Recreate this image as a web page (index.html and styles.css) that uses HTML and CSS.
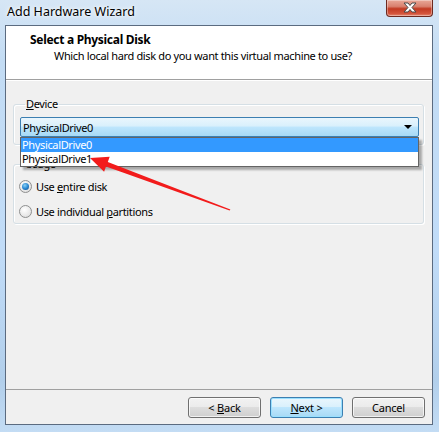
FILE: index.html
```html
<!DOCTYPE html>
<html>
<head>
<meta charset="utf-8">
<link rel="stylesheet" href="styles.css">
</head>
<body>
<div class="window">
  <div class="titlebar">
    <span class="title">Add Hardware Wizard</span>
    <div class="close">
      <svg width="18" height="11" viewBox="0 0 18 11"><path d="M3 1 L7 1 L9 3.5 L11 1 L15 1 L11 5.5 L15 10 L11 10 L9 7.5 L7 10 L3 10 L7 5.5 Z" fill="#fff" stroke="#4a4a4a" stroke-width="1"/></svg>
    </div>
  </div>
  <div class="client">
    <div class="header">
      <div class="h-title">Select a Physical Disk</div>
      <div class="h-sub">Which local hard disk do you want this virtual machine to use?</div>
    </div>
    <div class="content">
      <fieldset class="group device">
        <legend><u>D</u>evice</legend>
        <div class="combo"><span>PhysicalDrive0</span><span class="caret"></span></div>
      </fieldset>
      <fieldset class="group usage">
        <legend>Usage</legend>
        <div class="radio"><span class="rb checked"></span><span>Use <u>e</u>ntire disk</span></div>
        <div class="radio"><span class="rb"></span><span>Use individual <u>p</u>artitions</span></div>
      </fieldset>
      <div class="dropdown">
        <div class="opt sel">PhysicalDrive0</div>
        <div class="opt">PhysicalDrive1</div>
      </div>
    </div>
    <div class="footer">
      <button class="btn">&lt; <u>B</u>ack</button>
      <button class="btn default"><u>N</u>ext &gt;</button>
      <button class="btn">Cancel</button>
    </div>
  </div>
  <svg class="arrow" width="439" height="432" viewBox="0 0 439 432">
    <polygon points="90,158 109.7,156.8 107.8,162 230.4,209.4 229.6,210.6 106,166.6 104.1,171.8" fill="#f21b1b"/>
  </svg>
</div>
</body>
</html>
```
FILE: styles.css
```css
* { box-sizing: border-box; }
html, body { margin: 0; padding: 0; }
body {
  width: 439px;
  height: 432px;
  overflow: hidden;
  font-family: "Noto Sans", "Open Sans", sans-serif;
  font-size: 11px;
  letter-spacing: -0.35px;
  color: #000;
}
.window {
  position: relative;
  width: 439px;
  height: 432px;
  background: linear-gradient(180deg, #d6e6f5 0px, #c3dcf4 60px, #c1dcf8 250px, #b2cfeb 380px, #c3dcf4 432px);
  padding: 0 6px 0 5px;
  display: flex;
  flex-direction: column;
}
.titlebar {
  height: 25px;
  display: flex;
  align-items: flex-start;
  position: relative;
}
.title {
  padding-left: 2px;
  padding-top: 3px;
  font-size: 12.5px;
  letter-spacing: 0;
  line-height: 17px;
  color: #000;
  text-shadow: 0 0 6px #fff, 0 0 3px #fff;
}
.close {
  margin-left: auto;
  margin-right: 0;
  width: 47px;
  height: 17px;
  border: 1px solid #6d2a20;
  border-top: none;
  border-radius: 0 0 4px 4px;
  background: linear-gradient(180deg, #e9a898 0%, #d9816f 40%, #c23a22 55%, #d4553c 85%, #e48a72 100%);
  display: flex;
  align-items: center;
  justify-content: center;
  box-shadow: inset 0 0 0 1px rgba(255,255,255,0.35);
}
.close svg { display: block; margin-top: -1px; }
.client {
  height: 400px;
  border: 1px solid #5b6b80;
  background: #f0f0f0;
  display: flex;
  flex-direction: column;
  position: relative;
}
.header {
  height: 54px;
  background: #fff;
  border-bottom: 1px solid #a0a0a0;
  box-shadow: 0 1px 0 #fff;
  padding: 6px 0 0 24px;
}
.h-title {
  font-weight: bold;
  font-size: 12px;
  letter-spacing: -0.3px;
  line-height: 16px;
  height: 16px;
}
.h-sub {
  padding-left: 24px;
  line-height: 16px;
}
.content {
  flex: 1;
  position: relative;
  padding: 0 8px 0 7px;
}
.group {
  margin: 0;
  border: 1px solid #d5dfe5;
  border-radius: 3px;
  box-shadow: inset 1px 1px 0 #fff, 1px 1px 0 #fff;
  min-width: 0;
}
.group legend {
  padding: 0 1px;
  margin-left: 5px;
  line-height: 16px;
}
.device {
  margin-top: 16px;
  padding: 5px 4px 7px 6px;
}
.combo {
  height: 20px;
  border: 1px solid #3c7fb1;
  border-radius: 2px;
  background: linear-gradient(180deg, #eaf6fd 0%, #d9f0fc 45%, #bee6fd 50%, #a7d9f5 100%);
  display: flex;
  align-items: center;
  padding-left: 2px;
  padding-right: 6px;
}
.caret {
  margin-left: auto;
  width: 0;
  height: 0;
  border-left: 4px solid transparent;
  border-right: 4px solid transparent;
  border-top: 4px solid #000;
}
.usage {
  margin-top: 11px;
  padding: 6px 4px 4px 5px;
  display: flex;
  flex-direction: column;
  gap: 9px;
}
.radio {
  display: flex;
  align-items: center;
  height: 16px;
  gap: 4px;
}
.rb {
  width: 13px;
  height: 13px;
  border-radius: 50%;
  border: 1px solid #8e8f8f;
  background: radial-gradient(circle at 40% 35%, #ffffff 0%, #e8e8e8 60%, #d4d4d4 100%);
  position: relative;
}
.rb.checked::after {
  content: "";
  position: absolute;
  left: 2px;
  top: 2px;
  width: 7px;
  height: 7px;
  border-radius: 50%;
  background: radial-gradient(circle at 40% 35%, #8ad0f5 0%, #2a8ad4 50%, #0d3f7a 100%);
}
.dropdown {
  position: absolute;
  left: 14px;
  top: 57px;
  width: 399px;
  height: 30px;
  background: #fff;
  border: 1px solid #646464;
  box-shadow: 3px 3px 2px rgba(0,0,0,0.3);
}
.opt {
  height: 14px;
  line-height: 14px;
  padding-left: 1px;
}
.opt.sel {
  background: #3399ff;
  color: #fff;
}
.footer {
  height: 35px;
  border-top: 1px solid #a0a0a0;
  display: flex;
  justify-content: flex-end;
  gap: 9px;
  padding: 7px 7px 0 0;
}
.btn {
  width: 73px;
  height: 21px;
  font-family: inherit;
  font-size: 11px;
  letter-spacing: -0.2px;
  color: #000;
  border: 1px solid #707070;
  border-radius: 3px;
  background: linear-gradient(180deg, #f2f2f2 0%, #ebebeb 49%, #dddddd 50%, #cfcfcf 100%);
  box-shadow: inset 0 0 0 1px rgba(255,255,255,0.7);
  padding: 0;
  line-height: 17px;
}
.btn.default {
  border-color: #3c7fb1;
  background: linear-gradient(180deg, #eaf6fd 0%, #d9f0fc 49%, #bee6fd 50%, #a7d9f5 100%);
  box-shadow: inset 0 0 0 1px #9ae0ff;
}
.arrow {
  position: absolute;
  left: 0;
  top: 0;
  pointer-events: none;
}
```
